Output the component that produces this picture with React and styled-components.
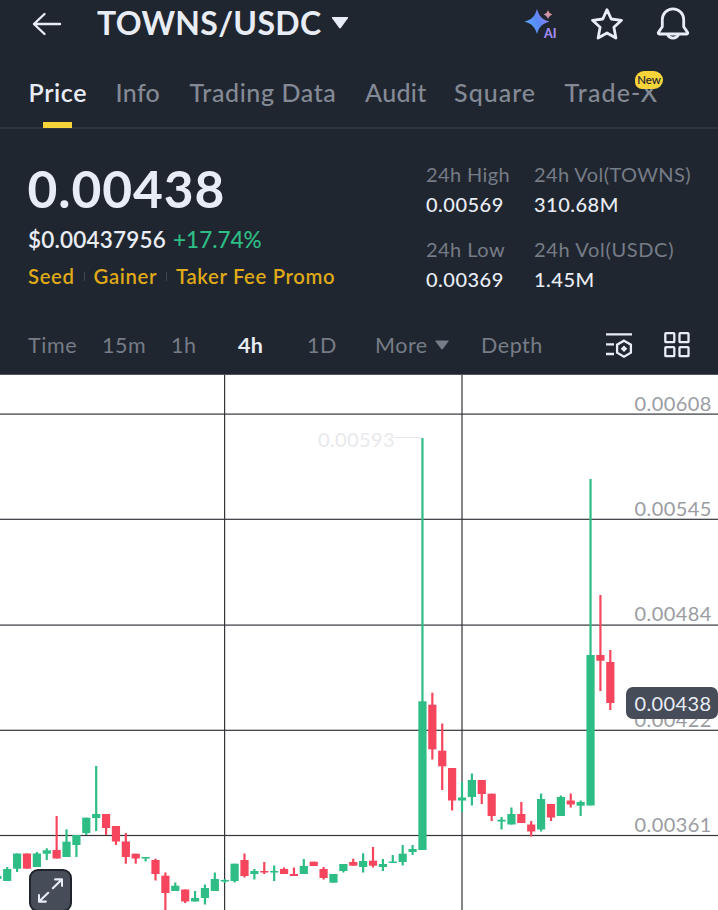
import React from "react";
import styled, { createGlobalStyle } from "styled-components";

const colors = {
  panel: "#20262f",
  line: "#2d343e",
  text: "#e8ecf5",
  muted: "#848a95",
  dim: "#767c87",
  yellow: "#f8d33a",
  gold: "#dfa918",
  up: "#2ebd85",
  down: "#f6465d",
  axis: "#9a9ca2",
  chip: "#464c58",
};

const GlobalStyle = createGlobalStyle`
  * { box-sizing: border-box; }
  body {
    margin: 0;
    background: #fff;
    font-family: Lato, "Open Sans", sans-serif;
    font-kerning: normal;
  }
`;

const Page = styled.div`
  width: 718px;
  height: 910px;
  overflow: hidden;
  display: flex;
  flex-direction: column;
`;

const Panel = styled.header`
  flex: none;
  height: 375px;
  background: ${colors.panel};
  border-bottom: 1px solid #50555d;
  color: ${colors.text};
  white-space: nowrap;
`;

const TitleBar = styled.div`
  height: 47px;
  display: flex;
  align-items: center;
  justify-content: space-between;
  padding: 0 28px 0 32px;
`;

const PairGroup = styled.div`
  display: flex;
  align-items: center;
`;

const PairName = styled.h1`
  margin: -1px 0 0 35px;
  width: 226px;
  font-size: 32px;
  line-height: 46px;
  font-weight: 700;
  letter-spacing: 0.3px;
`;

const Caret = styled.svg`
  display: block;
  margin: ${(p) => p.$margin};
  fill: ${(p) => p.$fill};
`;

const Actions = styled.div`
  display: flex;
  align-items: center;
  gap: 32px;
`;

const Icon = styled.svg`
  display: block;
  flex: none;
  fill: none;
  stroke: ${colors.text};
  stroke-linecap: round;
  stroke-linejoin: round;
`;

const TabBar = styled.nav`
  height: 82px;
  display: flex;
  align-items: stretch;
  padding-left: 28.6px;
  border-bottom: 2px solid ${colors.line};
`;

const Tab = styled.div`
  position: relative;
  width: ${(p) => p.$width}px;
  padding-top: 30px;
  font-size: 25px;
  line-height: 30px;
  font-weight: ${(p) => (p.$active ? 600 : 500)};
  letter-spacing: ${(p) => p.$spacing ?? 0.6}px;
  color: ${(p) => (p.$active ? colors.text : colors.muted)};
`;

const TabMarker = styled.span`
  position: absolute;
  left: 14.4px;
  bottom: -1px;
  width: 29px;
  height: 6px;
  background: ${colors.yellow};
`;

const NewBadge = styled.span`
  position: absolute;
  left: 70.4px;
  top: 24px;
  width: 28px;
  height: 18px;
  border-radius: 9px 9px 9px 7px;
  background: ${colors.yellow};
  color: #272a2e;
  font-size: 11.5px;
  line-height: 18px;
  font-weight: 600;
  letter-spacing: -0.1px;
  text-align: center;
`;

const Summary = styled.section`
  height: 188px;
  display: flex;
  padding-left: 28px;
`;

const Quote = styled.div`
  width: 398px;
  padding-top: 29px;
`;

const LastPrice = styled.div`
  margin-left: -0.5px;
  font-size: 51.5px;
  line-height: 60px;
  font-weight: 700;
  letter-spacing: 0.9px;
`;

const FiatRow = styled.div`
  display: flex;
  gap: 7px;
  margin-top: 7px;
  font-size: 22.5px;
  line-height: 30px;
  font-weight: 600;
`;

const FiatPrice = styled.span`
  letter-spacing: 0.2px;
`;

const Change = styled.span`
  color: ${colors.up};
  font-weight: 500;
  letter-spacing: 0;
`;

const Tags = styled.div`
  display: flex;
  align-items: center;
  margin-top: 6px;
  font-size: 20.3px;
  line-height: 30px;
  font-weight: 600;
  color: ${colors.gold};
  letter-spacing: 0.65px;
`;

const TagDivider = styled.i`
  width: 1px;
  height: 9px;
  margin: 0 9px;
  background: #404752;
`;

const Stats = styled.dl`
  display: grid;
  grid-template-columns: 108px 170px;
  grid-auto-rows: 75px;
  margin: 0;
  padding-top: 30px;
`;

const StatLabel = styled.dt`
  font-size: 20px;
  line-height: 30px;
  letter-spacing: ${(p) => p.$spacing}px;
  color: ${colors.dim};
`;

const StatValue = styled.dd`
  margin: 0;
  font-size: 20px;
  line-height: 30px;
  font-weight: 500;
  letter-spacing: 0.5px;
`;

const Intervals = styled.div`
  display: flex;
  align-items: center;
  height: 56px;
  padding-left: 28px;
`;

const Interval = styled.div`
  display: flex;
  align-items: center;
  width: ${(p) => p.$width}px;
  font-size: ${(p) => (p.$active ? 21.5 : 21.5)}px;
  line-height: 30px;
  font-weight: ${(p) => (p.$active ? 700 : 400)};
  letter-spacing: ${(p) => (p.$active ? 0.3 : 0.55)}px;
  color: ${(p) => (p.$active ? colors.text : colors.dim)};
`;

const ToolIcons = styled.div`
  display: flex;
  gap: 30px;
`;

const ChartArea = styled.main`
  position: relative;
  height: 535px;
  background: #fff;
`;

const Plot = styled.svg`
  display: block;
`;

const AxisLabel = styled.span`
  position: absolute;
  left: 634.6px;
  top: ${(p) => p.$y}px;
  font-size: 20px;
  line-height: 20px;
  letter-spacing: 0.4px;
  color: ${colors.axis};
`;

const HighLabel = styled(AxisLabel)`
  left: 318px;
  color: #e7e9ec;
`;

const PriceChip = styled.div`
  position: absolute;
  left: 626px;
  top: 312px;
  width: 92px;
  height: 32px;
  padding-left: 8.5px;
  border-radius: 7px;
  background: ${colors.chip};
  color: ${colors.text};
  font-size: 20px;
  line-height: 33px;
  letter-spacing: 0.4px;
`;

const ExpandButton = styled.button`
  position: absolute;
  left: 29px;
  top: 494px;
  width: 43px;
  height: 43px;
  display: grid;
  place-items: center;
  padding: 0;
  border: 2px solid #20252d;
  border-radius: 9px;
  background: ${colors.chip};
`;

const stats = [
  ["24h High", "0.00569", 0.4],
  ["24h Vol(TOWNS)", "310.68M", 0.4],
  ["24h Low", "0.00369", 0.45],
  ["24h Vol(USDC)", "1.45M", 0.65],
];

const tabs = [
  { name: "Price", width: 87, active: true },
  { name: "Info", width: 74, spacing: 0.3 },
  { name: "Trading Data", width: 175.5 },
  { name: "Audit", width: 89, spacing: 0.3 },
  { name: "Square", width: 110.5, spacing: 1 },
  { name: "Trade-X", width: 100, spacing: 1.1, badge: "New" },
];

const intervals = [
  { name: "Time", width: 74 },
  { name: "15m", width: 69 },
  { name: "1h", width: 67 },
  { name: "4h", width: 69, active: true },
  { name: "1D", width: 68 },
  { name: "More", width: 106, menu: true },
  { name: "Depth", width: 124 },
];

/* Each candle: direction, wick top, body top, body bottom, wick bottom. */
const candles = [
  ["u", 876, 876, 879, 879],
  ["u", 867, 869, 881, 881],
  ["u", 853.5, 853.5, 868.7, 872],
  ["d", 853.5, 853.5, 868.7, 868.7],
  ["u", 852, 853.5, 867, 867],
  ["u", 848.3, 850.3, 853.7, 860],
  ["d", 816, 850, 858.5, 858.5],
  ["u", 829.3, 841.7, 857, 857],
  ["u", 835, 835, 845, 857],
  ["u", 817.7, 817.7, 833, 835],
  ["u", 766, 814, 818, 831],
  ["d", 814, 814, 828, 835],
  ["d", 826, 826, 841.5, 845],
  ["d", 833, 841.5, 857, 863.7],
  ["d", 853.7, 853.7, 858.5, 863.7],
  ["u", 857, 857, 858.5, 861.5],
  ["d", 858.7, 860, 874, 880.5],
  ["d", 872.5, 875.7, 893, 912],
  ["u", 882.5, 885.7, 891, 891],
  ["d", 889.5, 889.5, 901.5, 903],
  ["u", 891, 898, 901.5, 901.5],
  ["u", 884.5, 888, 898, 904.5],
  ["u", 872.5, 879, 891, 891],
  ["u", 879, 880, 881.5, 883],
  ["u", 863.7, 863.7, 881, 882.5],
  ["d", 853.5, 860, 876, 877.5],
  ["u", 869, 871, 874, 879.5],
  ["d", 862, 871, 872.5, 874],
  ["u", 865.5, 871, 872.5, 881],
  ["d", 867.5, 869, 874, 874],
  ["d", 867.5, 874, 876, 876],
  ["u", 859, 866, 874, 874],
  ["d", 861.7, 861.7, 866, 866],
  ["d", 867, 869, 878, 879.5],
  ["u", 874, 874, 882.7, 882.7],
  ["u", 864, 864, 871, 872.5],
  ["d", 858.7, 862, 865.7, 865.7],
  ["u", 853.3, 861, 867, 872.5],
  ["d", 847, 860.7, 865.7, 867.5],
  ["u", 859, 864, 867, 871],
  ["u", 855, 861.5, 863, 863],
  ["u", 845, 853.7, 862, 865.5],
  ["u", 845, 849, 852, 855],
  ["u", 438, 701.3, 850, 850],
  ["d", 692.7, 704.7, 749.3, 759.5],
  ["d", 723.5, 750.7, 766.3, 790],
  ["d", 768, 768, 800.5, 810.5],
  ["u", 782, 797.5, 800.5, 812],
  ["u", 773.5, 780, 797, 805.5],
  ["d", 780, 780, 794, 804],
  ["d", 793.7, 793.7, 816, 821],
  ["u", 817, 819.7, 821.5, 829.5],
  ["u", 807.5, 814, 824.5, 824.5],
  ["d", 802, 814, 823, 823],
  ["d", 821, 824.5, 831.5, 836.5],
  ["u", 793.5, 799, 829.5, 831.5],
  ["d", 804, 804, 817.5, 821],
  ["u", 795.5, 797, 816, 816],
  ["d", 793.5, 800.5, 804.5, 807.5],
  ["u", 800.5, 802, 805.7, 816],
  ["u", 479, 655, 805.5, 805.5],
  ["d", 595, 655, 660.7, 691],
  ["d", 650, 662, 703, 710],
];

const axis = [
  ["0.00608", 403],
  ["0.00545", 508],
  ["0.00484", 613],
  ["0.00422", 719],
  ["0.00361", 824],
];

const CHART_TOP = 375;

function BackIcon() {
  return (
    <Icon width="30" height="24" viewBox="0 0 30 24" strokeWidth="2.4">
      <path d="M28 12H2M12.5 2L2 12l10.5 10" />
    </Icon>
  );
}

function AiIcon() {
  return (
    <Icon width="34" height="34" viewBox="0 0 34 34">
      <defs>
        <linearGradient id="spark" x1="0" y1="0.7" x2="1" y2="0.2">
          <stop offset="0" stopColor="#62a8f8" />
          <stop offset="0.5" stopColor="#5788f4" />
          <stop offset="1" stopColor="#a27bf0" />
        </linearGradient>
        <linearGradient id="mini" x1="0" y1="1" x2="1" y2="0">
          <stop offset="0" stopColor="#b58bd8" />
          <stop offset="1" stopColor="#f09a78" />
        </linearGradient>
      </defs>
      <g stroke="none">
        <path fill="url(#spark)" d="M13 2C15.2 9.500 18 12.500 25.500 14.500c-7.500 2.400-10.300 5.200-12.500 12.500C10.800 19.700 8 16.900 .5 14.500 8 12.500 10.800 9.500 13 2z" />
        <path fill="url(#mini)" d="M24 3c1 2.700 1.900 3.600 4.500 4.500-2.600 1-3.500 1.900-4.500 4.600-1-2.700-1.900-3.600-4.500-4.600C22.100 6.600 23 5.700 24 3z" />
        <text x="20" y="31.300" fill="#a08af0" fontFamily="Lato, sans-serif" fontSize="12.500" fontWeight="900">AI</text>
      </g>
    </Icon>
  );
}

function StarIcon() {
  return (
    <Icon width="34" height="34" viewBox="0 0 34 34" strokeWidth="2.800">
      <path d="M17 2.700l4.200 9.300 10.300 1.300-7.600 7 2 10.700L17 26l-8.900 5 2-10.700-7.600-7L12.800 12z" />
    </Icon>
  );
}

function BellIcon() {
  return (
    <Icon width="34" height="36" viewBox="0 0 34 36" strokeWidth="2.800">
      <path d="M6.300 20.800V13.500a10.700 10.700 0 0 1 21.400 0v7.300l3.700 5.300a1.100 1.100 0 0 1-.9 1.900H3.500a1.100 1.100 0 0 1-.9-1.900z" />
      <path d="M11.600 28.500a5.700 5.200 0 0 0 10.800 0" />
    </Icon>
  );
}

function IndicatorIcon() {
  return (
    <Icon width="28" height="28" viewBox="0 0 28 28" strokeWidth="2.300">
      <path strokeLinecap="butt" d="M1 3.300h26M1 13.300h8M1 23h8" />
      <path strokeLinejoin="miter" d="M19 9.700l6.900 4v8l-6.900 4-6.900-4v-8z" />
      <path stroke="none" fill={colors.text} d="M19 14.400l3.300 3.300-3.300 3.300-3.300-3.300z" />
    </Icon>
  );
}

function GridIcon() {
  return (
    <Icon width="28" height="28" viewBox="0 0 28 28" strokeWidth="2.300">
      {[[2.3, 2.2], [16.5, 2.2], [2.3, 16.2], [16.5, 16.2]].map(([x, y]) => (
        <rect key={`${x}-${y}`} x={x} y={y} width="9" height="9" rx="0.700" />
      ))}
    </Icon>
  );
}

function Candle({ index, data }) {
  const [dir, wickTop, top, bottom, wickBottom] = data;
  const x = 7.2 + 9.887 * (index - 1);
  return (
    <g fill={dir === "u" ? colors.up : colors.down}>
      <rect x={x - 1.1} y={wickTop} width="2.2" height={wickBottom - wickTop} />
      <rect x={x - 4.1} y={top} width="8.2" height={bottom - top} />
    </g>
  );
}

function Chart() {
  return (
    <ChartArea>
      <Plot width="718" height="535" viewBox="0 375 718 535">
        <g fill="#33353a">
          {[413.5, 518.7, 624.5, 729.7, 834.9].map((y) => (
            <rect key={y} x="0" y={y} width="718" height="1.200" />
          ))}
          {[224, 461.4].map((x) => (
            <rect key={x} x={x} y="375" width="1.200" height="535" />
          ))}
        </g>
        <path d="M395 437.500H422" stroke="#e4e6e9" />
        {candles.map((c, i) => (
          <Candle key={i} index={i} data={c} />
        ))}
      </Plot>
      {axis.map(([label, y]) => (
        <AxisLabel key={label} $y={y - CHART_TOP - 10}>{label}</AxisLabel>
      ))}
      <HighLabel $y={54}>0.00593</HighLabel>
      <PriceChip>0.00438</PriceChip>
      <ExpandButton aria-label="Expand chart">
        <Icon width="25" height="25" viewBox="0 0 27 27" strokeWidth="2.300">
          <path d="M16 11L25.500 2M18.500 1.500H26v7M11 16l-9.500 9M8.500 25.500H1v-7" />
        </Icon>
      </ExpandButton>
    </ChartArea>
  );
}

export default function App() {
  return (
    <>
      <GlobalStyle />
      <Page>
        <Panel>
          <TitleBar>
            <PairGroup>
              <BackIcon />
              <PairName>TOWNS/USDC</PairName>
              <Caret width="18" height="12" viewBox="0 0 18 12" $margin="-2px 0 0 8px" $fill={colors.text}>
                <path d="M1.800 0h14.400q1.600 0 .7 1.300L10 10.800q-1 1.200-2 0L1.100 1.300Q.2 0 1.800 0z" />
              </Caret>
            </PairGroup>
            <Actions>
              <AiIcon />
              <StarIcon />
              <BellIcon />
            </Actions>
          </TitleBar>
          <TabBar>
            {tabs.map((t) => (
              <Tab key={t.name} $width={t.width} $active={t.active} $spacing={t.spacing}>
                {t.name}
                {t.active && <TabMarker />}
                {t.badge && <NewBadge>{t.badge}</NewBadge>}
              </Tab>
            ))}
          </TabBar>
          <Summary>
            <Quote>
              <LastPrice>0.00438</LastPrice>
              <FiatRow>
                <FiatPrice>$0.00437956</FiatPrice>
                <Change>+17.74%</Change>
              </FiatRow>
              <Tags>
                <span>Seed</span>
                <TagDivider />
                <span>Gainer</span>
                <TagDivider />
                <span>Taker Fee Promo</span>
              </Tags>
            </Quote>
            <Stats>
              {stats.map(([label, value, spacing]) => (
                <div key={label}>
                  <StatLabel $spacing={spacing}>{label}</StatLabel>
                  <StatValue>{value}</StatValue>
                </div>
              ))}
            </Stats>
          </Summary>
          <Intervals>
            {intervals.map((t) => (
              <Interval key={t.name} $width={t.width} $active={t.active}>
                {t.name}
                {t.menu && (
                  <Caret width="14" height="10" viewBox="0 0 14 10" $margin="0 0 0 7px" $fill={colors.dim}>
                    <path d="M1 .5h12q1 0 .4 1L8 8.800q-1 1-2 0L.6 1.500Q0 .5 1 .5z" />
                  </Caret>
                )}
              </Interval>
            ))}
            <ToolIcons>
              <IndicatorIcon />
              <GridIcon />
            </ToolIcons>
          </Intervals>
        </Panel>
        <Chart />
      </Page>
    </>
  );
}
